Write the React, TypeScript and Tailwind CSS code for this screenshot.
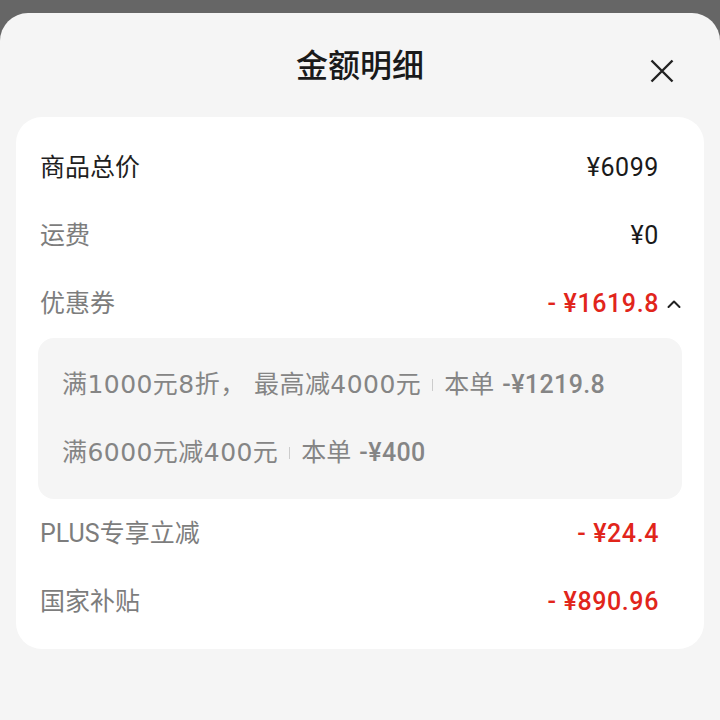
import React from "react";

const font = { fontFamily: 'Roboto, "Noto Sans CJK SC", sans-serif' };
const ruleFont = { fontFamily: '"DejaVu Sans", "Noto Sans CJK SC", sans-serif' };

function Row({
  label,
  value,
  labelDark,
  red,
  chevron,
}: {
  label: string;
  value: string;
  labelDark?: boolean;
  red?: boolean;
  chevron?: boolean;
}) {
  return (
    <div className="flex h-[68px] items-center justify-between pl-[24px] pr-[45px]">
      <span className={`text-[25px] ${labelDark ? "text-[#1f1f1f]" : "text-[#7d7d7d]"}`}>{label}</span>
      <span className="relative flex items-center">
        <span
          className={`text-[25px] tracking-[0.6px] ${red ? "font-medium text-[#e1251b]" : "text-[#1a1a1a]"}`}
        >
          {value}
        </span>
        {chevron && (
          <svg
            className="absolute left-[calc(100%+7px)] top-1/2 -translate-y-1/2"
            width="16"
            height="12"
            viewBox="0 0 16 12"
            fill="none"
          >
            <path d="M2.5 9 L8 3.5 L13.5 9" stroke="#222" strokeWidth="2" strokeLinecap="round" strokeLinejoin="round" />
          </svg>
        )}
      </span>
    </div>
  );
}

function Coupon({ rule, amount }: { rule: string; amount: string }) {
  return (
    <div className="flex h-[68px] items-center text-[25px] text-[#858585]">
      <span className="tracking-[0.45px]" style={ruleFont}>
        {rule}
      </span>
      <span className="mx-[11px] h-[12px] w-px bg-[#cccccc]" />
      <span>本单</span>
      <span className="ml-[8px] font-medium tracking-[0.4px]">-{amount}</span>
    </div>
  );
}

export default function App() {
  return (
    <div className="h-[720px] w-[720px] overflow-hidden bg-[#666666] pt-[13px]" style={font}>
      <div className="flex h-full flex-col rounded-t-[28px] bg-[#f5f5f5]">
        <div className="relative flex h-[104px] items-center justify-center pt-[1px]">
          <h1 className="text-[32px] font-medium text-[#1a1a1a]">金额明细</h1>
          <svg
            className="absolute right-[46px] top-[46px]"
            width="24"
            height="24"
            viewBox="0 0 24 24"
            fill="none"
          >
            <path d="M1.5 1.5 L22.5 22.5 M22.5 1.5 L1.5 22.5" stroke="#222" strokeWidth="2.4" />
          </svg>
        </div>
        <div className="mx-[16px] rounded-[26px] bg-white pb-[13px] pt-[17px]">
          <Row label="商品总价" value="¥6099" labelDark />
          <Row label="运费" value="¥0" />
          <Row label="优惠券" value="- ¥1619.8" red chevron />
          <div className="mx-[22px] mb-px rounded-[16px] bg-[#f5f5f5] pb-[12px] pl-[24px] pt-[13px]">
            <Coupon rule="满1000元8折， 最高减4000元" amount="¥1219.8" />
            <Coupon rule="满6000元减400元" amount="¥400" />
          </div>
          <Row label="PLUS专享立减" value="- ¥24.4" red />
          <Row label="国家补贴" value="- ¥890.96" red />
        </div>
      </div>
    </div>
  );
}
